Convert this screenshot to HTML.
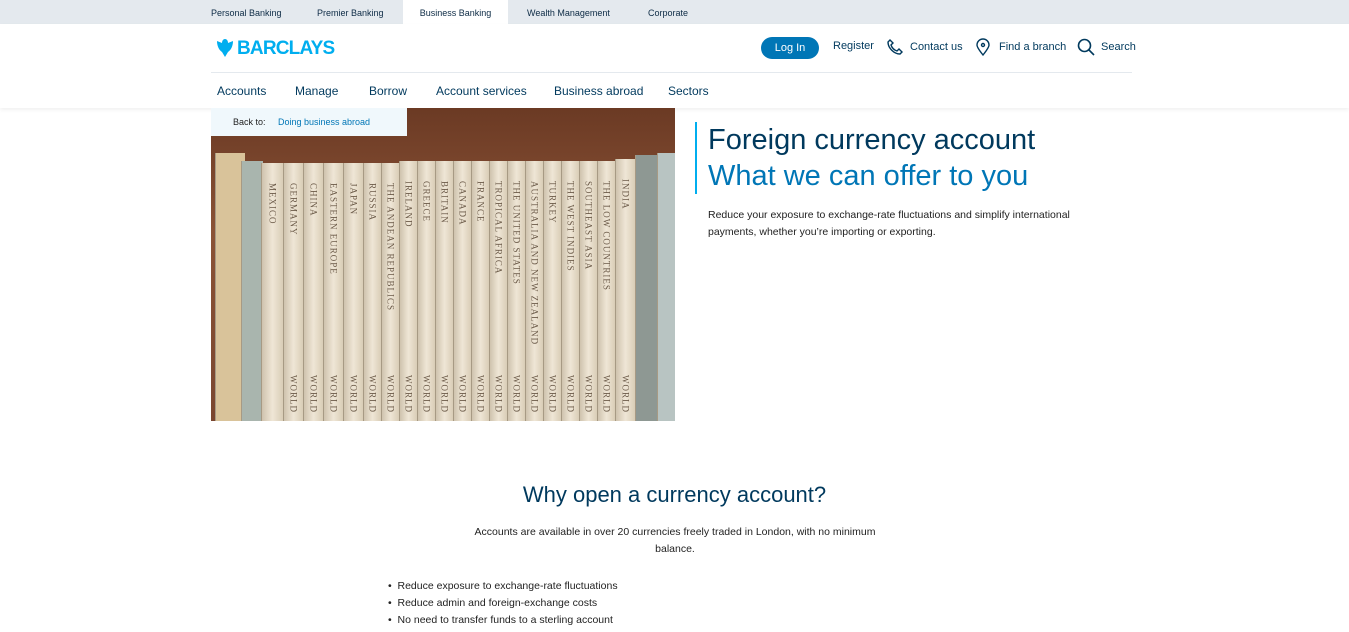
<!DOCTYPE html>
<html><head><meta charset="utf-8"><style>
*{margin:0;padding:0;box-sizing:border-box}
body{width:1349px;height:632px;overflow:hidden;background:#fff;font-family:"Liberation Sans",sans-serif;color:#00395d;position:relative}
.top{position:absolute;left:0;top:0;width:1349px;height:24px;background:#e4e9ee}
.top span{position:absolute;top:8px;font-size:9px;color:#0d2b45}
.top .act{background:#fff;height:24px;top:0;padding-top:8px;left:403px;width:105px;text-align:center}
.hdr{position:absolute;left:0;top:24px;width:1349px;height:84px;background:#fff;box-shadow:0 2px 4px rgba(0,0,0,.06)}
.logo{position:absolute;left:237px;top:38px;font-size:19px;font-weight:bold;color:#00aeef;letter-spacing:-0.8px}
.login{position:absolute;left:761px;top:37px;width:58px;height:22px;border-radius:11px;background:#0076b6;color:#fff;font-size:11px;text-align:center;line-height:22px}
.u{position:absolute;top:41px;font-size:11px;color:#00395d}
.line{position:absolute;left:211px;top:72px;width:921px;height:1px;background:#e4e9ee}
.nav{position:absolute;top:84px;font-size:12px;color:#00395d}
.back{position:absolute;left:211px;top:108px;width:196px;height:28px;background:#f0f8fc;font-size:9px;z-index:2}
.img{position:absolute;left:211px;top:108px;width:464px;height:313px;background:linear-gradient(#6b3a24,#8a5236 40%,#7a4630);overflow:hidden}
.sp{position:absolute;bottom:0;background:linear-gradient(90deg,#cfc3ae,#efe6d6 50%,#d9cdb6);border-left:1px solid #a79a84}
.sp i{position:absolute;left:50%;top:20px;writing-mode:vertical-rl;transform:translateX(-50%);font-style:normal;font-family:"Liberation Serif",serif;font-size:9px;color:#6b5a48;letter-spacing:1px}
.sp b{position:absolute;left:50%;bottom:8px;writing-mode:vertical-rl;transform:translateX(-50%);font-weight:normal;font-family:"Liberation Serif",serif;font-size:9px;color:#6b5a48;letter-spacing:1px}
h1{position:absolute;left:708px;top:122px;font-weight:normal;font-size:29px;color:#00395d;line-height:36px}
h1 .b{color:#0076b6;display:block}
.bar{position:absolute;left:695px;top:122px;width:2px;height:72px;background:#00aeef}
p{font-size:10.5px;line-height:17px;color:#222}
</style></head><body>
<div class="top">
<span style="left:211px">Personal Banking</span>
<span style="left:317px">Premier Banking</span>
<span class="act">Business Banking</span>
<span style="left:527px">Wealth Management</span>
<span style="left:648px">Corporate</span>
</div>
<div class="hdr"></div>
<svg style="position:absolute;left:216px;top:38px" width="18" height="20" viewBox="0 0 18 20"><path d="M9 1c-2 0-3 2-3 4L1 3c0 5 2 9 5 11l3 5 3-5c3-2 5-6 5-11l-5 2c0-2-1-4-3-4z" fill="#00aeef"/></svg>
<div class="logo">BARCLAYS</div>
<div class="login">Log In</div>
<div class="u" style="left:833px;top:40px">Register</div>
<svg style="position:absolute;left:886px;top:38px" width="18" height="18" viewBox="0 0 18 18" fill="none" stroke="#00395d" stroke-width="1.4"><path d="M4 2l3 3-2 2c1 3 3 5 6 6l2-2 3 3-2 2C8 16 2 10 2 4z"/></svg>
<div class="u" style="left:910px">Contact us</div>
<svg style="position:absolute;left:975px;top:38px" width="16" height="18" viewBox="0 0 16 18" fill="none" stroke="#00395d" stroke-width="1.4"><path d="M8 17C4 12 2 9 2 7a6 6 0 0112 0c0 2-2 5-6 10z"/><circle cx="8" cy="7" r="1.5"/></svg>
<div class="u" style="left:999px">Find a branch</div>
<svg style="position:absolute;left:1077px;top:38px" width="18" height="18" viewBox="0 0 18 18" fill="none" stroke="#00395d" stroke-width="1.6"><circle cx="7.5" cy="7.5" r="6"/><path d="M12 12l5 5"/></svg>
<div class="u" style="left:1101px">Search</div>
<div class="line"></div>
<div class="nav" style="left:217px">Accounts</div>
<div class="nav" style="left:295px">Manage</div>
<div class="nav" style="left:369px">Borrow</div>
<div class="nav" style="left:436px">Account services</div>
<div class="nav" style="left:554px">Business abroad</div>
<div class="nav" style="left:668px">Sectors</div>
<div class="img">
<div class="sp" style="left:4px;width:30px;height:268px;background:#d9c39a"></div>
<div class="sp" style="left:30px;width:22px;height:260px;background:#a9b5ae"></div>
<div class="sp" style="left:50px;width:22px;height:258px"><i>MEXICO</i></div>
<div class="sp" style="left:72px;width:20px;height:258px"><i>GERMANY</i><b>WORLD</b></div>
<div class="sp" style="left:92px;width:20px;height:258px"><i>CHINA</i><b>WORLD</b></div>
<div class="sp" style="left:112px;width:20px;height:258px"><i>EASTERN EUROPE</i><b>WORLD</b></div>
<div class="sp" style="left:132px;width:20px;height:258px"><i>JAPAN</i><b>WORLD</b></div>
<div class="sp" style="left:152px;width:18px;height:258px"><i>RUSSIA</i><b>WORLD</b></div>
<div class="sp" style="left:170px;width:18px;height:258px"><i>THE ANDEAN REPUBLICS</i><b>WORLD</b></div>
<div class="sp" style="left:188px;width:18px;height:260px"><i>IRELAND</i><b>WORLD</b></div>
<div class="sp" style="left:206px;width:18px;height:260px"><i>GREECE</i><b>WORLD</b></div>
<div class="sp" style="left:224px;width:18px;height:260px"><i>BRITAIN</i><b>WORLD</b></div>
<div class="sp" style="left:242px;width:18px;height:260px"><i>CANADA</i><b>WORLD</b></div>
<div class="sp" style="left:260px;width:18px;height:260px"><i>FRANCE</i><b>WORLD</b></div>
<div class="sp" style="left:278px;width:18px;height:260px"><i>TROPICAL AFRICA</i><b>WORLD</b></div>
<div class="sp" style="left:296px;width:18px;height:260px"><i>THE UNITED STATES</i><b>WORLD</b></div>
<div class="sp" style="left:314px;width:18px;height:260px"><i>AUSTRALIA AND NEW ZEALAND</i><b>WORLD</b></div>
<div class="sp" style="left:332px;width:18px;height:260px"><i>TURKEY</i><b>WORLD</b></div>
<div class="sp" style="left:350px;width:18px;height:260px"><i>THE WEST INDIES</i><b>WORLD</b></div>
<div class="sp" style="left:368px;width:18px;height:260px"><i>SOUTHEAST ASIA</i><b>WORLD</b></div>
<div class="sp" style="left:386px;width:18px;height:260px"><i>THE LOW COUNTRIES</i><b>WORLD</b></div>
<div class="sp" style="left:404px;width:20px;height:262px"><i>INDIA</i><b>WORLD</b></div>
<div class="sp" style="left:424px;width:22px;height:266px;background:#8e9893"></div>
<div class="sp" style="left:446px;width:18px;height:268px;background:#b8c4c2"></div>
</div>
<div class="back"><span style="position:absolute;left:22px;top:9px;color:#222">Back to:</span><span style="position:absolute;left:67px;top:9px;color:#0076b6">Doing business abroad</span></div>
<div class="bar"></div>
<h1>Foreign currency account<span class="b">What we can offer to you</span></h1>
<p style="position:absolute;left:708px;top:207px;width:390px">Reduce your exposure to exchange-rate fluctuations and simplify international payments, whether you’re importing or exporting.</p>
<div style="position:absolute;left:0;width:1349px;top:482px;text-align:center;font-size:22px;color:#00395d">Why open a currency account?</div>
<p style="position:absolute;left:460px;top:524px;width:430px;text-align:center">Accounts are available in over 20 currencies freely traded in London, with no minimum balance.</p>
<p style="position:absolute;left:388px;top:578px">• &nbsp;Reduce exposure to exchange-rate fluctuations<br>• &nbsp;Reduce admin and foreign-exchange costs<br>• &nbsp;No need to transfer funds to a sterling account</p>
</body></html>
